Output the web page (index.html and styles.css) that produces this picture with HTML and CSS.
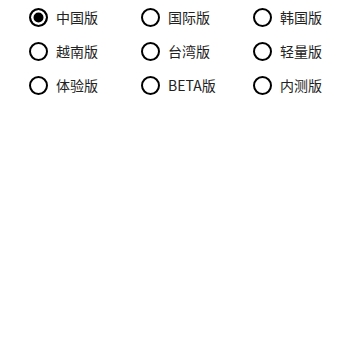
FILE: index.html
```html
<!DOCTYPE html>
<html lang="zh-CN">
<head>
<meta charset="utf-8">
<link rel="stylesheet" href="styles.css">
</head>
<body>
<div class="grid">
  <label class="item"><span class="radio checked"></span><span class="label">中国版</span></label>
  <label class="item"><span class="radio"></span><span class="label">国际版</span></label>
  <label class="item"><span class="radio"></span><span class="label">韩国版</span></label>
  <label class="item"><span class="radio"></span><span class="label">越南版</span></label>
  <label class="item"><span class="radio"></span><span class="label">台湾版</span></label>
  <label class="item"><span class="radio"></span><span class="label">轻量版</span></label>
  <label class="item"><span class="radio"></span><span class="label">体验版</span></label>
  <label class="item"><span class="radio"></span><span class="label">BETA版</span></label>
  <label class="item"><span class="radio"></span><span class="label">内测版</span></label>
</div>
</body>
</html>
```
FILE: styles.css
```css
html, body {
  margin: 0;
  padding: 0;
  background: #fff;
}
body {
  font-family: "Noto Sans CJK SC", sans-serif;
  color: #222;
}
.grid {
  display: grid;
  grid-template-columns: 112px 112px 112px;
  grid-auto-rows: 34px;
  padding-left: 29px;
}
.item {
  display: flex;
  align-items: center;
  gap: 8px;
}
.radio {
  box-sizing: border-box;
  width: 19px;
  height: 19px;
  border: 2px solid #000;
  border-radius: 50%;
  flex: none;
}
.radio.checked {
  background: #000;
  box-shadow: inset 0 0 0 2.5px #fff;
}
.label {
  font-size: 14px;
  line-height: 18px;
}
```
